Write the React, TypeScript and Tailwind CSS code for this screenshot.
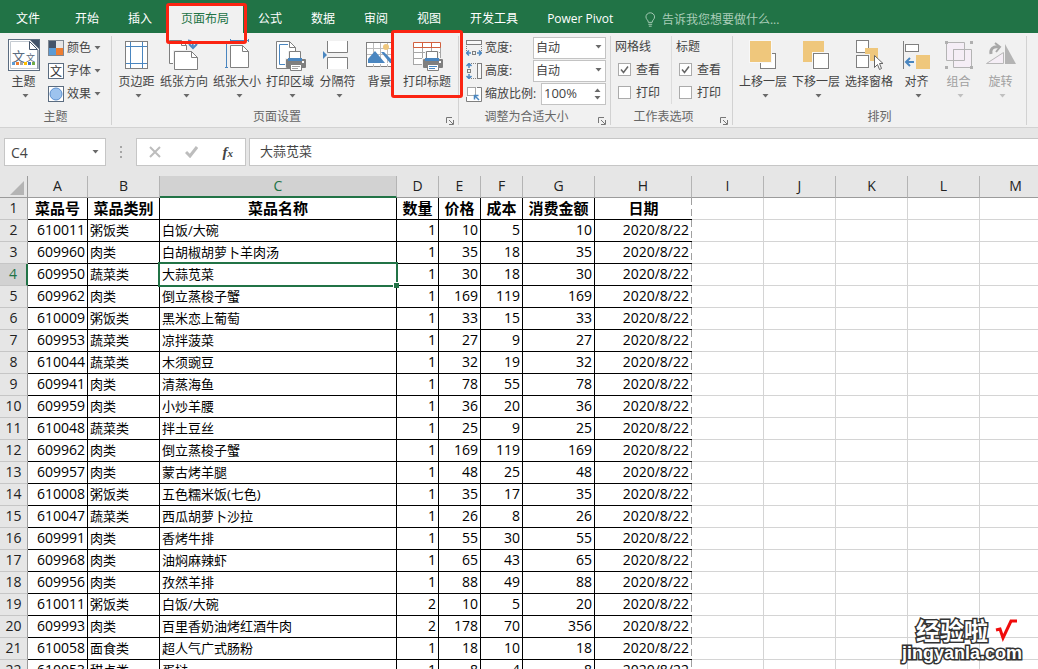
import type { ReactNode } from 'react'

type Row = [string, string, string, number, number, number, number]

const ROWS: Row[] = [
    ['610011', '粥饭类', '白饭/大碗', 1, 10, 5, 10],
    ['609960', '肉类', '白胡椒胡萝卜羊肉汤', 1, 35, 18, 35],
    ['609950', '蔬菜类', '大蒜苋菜', 1, 30, 18, 30],
    ['609962', '肉类', '倒立蒸梭子蟹', 1, 169, 119, 169],
    ['610009', '粥饭类', '黑米恋上葡萄', 1, 33, 15, 33],
    ['609953', '蔬菜类', '凉拌菠菜', 1, 27, 9, 27],
    ['610044', '蔬菜类', '木须豌豆', 1, 32, 19, 32],
    ['609941', '肉类', '清蒸海鱼', 1, 78, 55, 78],
    ['609959', '肉类', '小炒羊腰', 1, 36, 20, 36],
    ['610048', '蔬菜类', '拌土豆丝', 1, 25, 9, 25],
    ['609962', '肉类', '倒立蒸梭子蟹', 1, 169, 119, 169],
    ['609957', '肉类', '蒙古烤羊腿', 1, 48, 25, 48],
    ['610008', '粥饭类', '五色糯米饭(七色)', 1, 35, 17, 35],
    ['610047', '蔬菜类', '西瓜胡萝卜沙拉', 1, 26, 8, 26],
    ['609991', '肉类', '香烤牛排', 1, 55, 30, 55],
    ['609968', '肉类', '油焖麻辣虾', 1, 65, 43, 65],
    ['609956', '肉类', '孜然羊排', 1, 88, 49, 88],
    ['610011', '粥饭类', '白饭/大碗', 2, 10, 5, 20],
    ['609993', '肉类', '百里香奶油烤红酒牛肉', 2, 178, 70, 356],
    ['610058', '面食类', '超人气广式肠粉', 1, 18, 10, 18],
    ['610053', '甜点类', '蛋挞', 1, 8, 4, 8],
]

const DATE = '2020/8/22'
const HEADERS = ['菜品号', '菜品类别', '菜品名称', '数量', '价格', '成本', '消费金额', '日期']
const COLUMNS = ['A', 'B', 'C', 'D', 'E', 'F', 'G', 'H', 'I', 'J', 'K', 'L', 'M']
const EMPTY = ['I', 'J', 'K', 'L', 'M']
const TABS = ['开始', '插入', '页面布局', '公式', '数据', '审阅', '视图', '开发工具', 'Power Pivot']

const GRAY = '#7f7f7f'
const BLUE = '#4a86c0'
const SAND = '#efc77c'

function Caret({ className = 'text-[#6a6a6a]' }: { className?: string }) {
    return (
        <svg width="7" height="4" viewBox="0 0 7 4" className={`shrink-0 ${className}`}>
            <path d="M0.5 0h6L3.5 3.5z" fill="currentColor" />
        </svg>
    )
}

function Icon({ children, size = 32 }: { children: ReactNode; size?: number }) {
    return (
        <svg width={size} height={size} viewBox={`0 0 ${size} ${size}`} className="shrink-0" fill="none">
            {children}
        </svg>
    )
}

function Printer({ lines }: { lines: string }) {
    return (
        <g>
            <path d="M14 12h14v7h5v10h-22v-10h3z" fill="#f1f1f1" />
            <rect x="12" y="20" width="20" height="9" rx="1" fill={GRAY} />
            <path d="M15.5 20.5v-8h11v8z" fill="#fff" stroke={GRAY} />
            <rect x="14" y="19" width="14" height="3" fill={BLUE} />
            <rect x="28" y="22" width="2" height="2" fill="#fff" />
            <path d="M16.5 25.5h11v6h-11z" fill="#fff" stroke={GRAY} />
            <path d="M18 27.5h8M18 29.5h6" stroke={lines} />
        </g>
    )
}

const themeIcon = (
    <Icon>
        <rect x="0.5" y="0.5" width="31" height="31" fill="#fff" stroke="#5b6c80" />
        <path d="M2.5 29.5v-27h19l8 8v19z" stroke="#c4cad1" />
        <path d="M30 11v19" stroke="#5b6c80" />
        <path d="M22 1h9v9z" fill="#44546a" />
        <path d="M21.5 2.5v8h8z" fill="#fff" stroke="#44546a" />
        <text x="4" y="22" fontSize="13" fill="#5b6c80">文</text>
        <text x="18" y="22" fontSize="9" fill="#5b6c80">文</text>
        <rect x="4" y="23" width="3" height="3" fill="#5b9bd5" />
        <rect x="8" y="23" width="3" height="3" fill="#ed7d31" />
        <rect x="12" y="23" width="3" height="3" fill="#a5a5a5" />
        <rect x="16" y="23" width="3" height="3" fill="#ffc000" />
        <rect x="20" y="23" width="3" height="3" fill="#4472c4" />
        <rect x="24" y="23" width="3" height="3" fill="#70ad47" />
    </Icon>
)

const colorsIcon = (
    <Icon size={16}>
        <rect width="16" height="16" fill="#7f8791" />
        <rect x="1" y="1" width="7" height="7" fill="#44546a" />
        <rect x="8" y="1" width="7" height="7" fill="#e7e6e6" />
        <rect x="1" y="8" width="7" height="7" fill="#5b9bd5" />
        <rect x="8" y="8" width="7" height="7" fill="#ed7d31" />
    </Icon>
)

const fontsIcon = (
    <Icon size={16}>
        <rect x="0.5" y="0.5" width="15" height="15" fill="#fff" stroke="#5b6c80" />
        <text x="2" y="13" fontSize="12" fill="#333">文</text>
    </Icon>
)

const effectsIcon = (
    <Icon size={16}>
        <rect x="0.5" y="0.5" width="15" height="15" fill="#fff" stroke="#5b6c80" />
        <circle cx="8" cy="8" r="6" fill="#9dc3ee" stroke="#5b8fcf" />
    </Icon>
)

const marginsIcon = (
    <Icon>
        <rect x="4.5" y="2.5" width="22" height="27" fill="#fff" stroke={GRAY} />
        <path d="M9.5 3v26M21.5 3v26M5 7.5h21M5 24.5h21" stroke={BLUE} />
    </Icon>
)

const orientationIcon = (
    <Icon>
        <path d="M1.5 24.5v-23h12l5 5v18z" fill="#fff" stroke={GRAY} />
        <path d="M13.5 1.5v5h5" stroke={GRAY} />
        <path d="M5 11h19l8 7v14H5z" fill="#f1f1f1" />
        <path d="M6.5 30.5v-18h17l6 6v12z" fill="#fff" stroke={GRAY} />
        <path d="M23.5 12.5v6h6" stroke={GRAY} />
        <path d="M20 1.5c4 0 5 2 5 6" stroke={BLUE} strokeWidth="2" />
        <path d="M21 5l4 4 4-4" stroke={BLUE} strokeWidth="2" />
    </Icon>
)

const sizeIcon = (
    <Icon>
        <path d="M5.5 2v27M4 2.5h3M4 28.5h3M9 1.5h18M9.5 0v3M27.5 0v3" stroke={BLUE} />
        <path d="M9.5 28.5v-22h12l6 6v16z" fill="#fff" stroke={GRAY} />
        <path d="M21.5 6.5v6h6" stroke={GRAY} />
    </Icon>
)

const printAreaIcon = (
    <Icon>
        <path d="M2.5 29.5v-27h13l6 6v21z" fill="#fff" stroke={GRAY} />
        <path d="M15.5 2.5v6h6" stroke={GRAY} />
        <path d="M14 5.5H5.5v20H12" stroke={BLUE} />
        <Printer lines="#a0a0a0" />
    </Icon>
)

const breaksIcon = (
    <Icon>
        <path d="M6 2h19v11H6zM6 19h19v11H6z" fill="#fff" />
        <path d="M5.5 2v11.5h20V2M5.5 30V18.5h20V30" stroke={GRAY} />
        <path d="M1 12l4 4-4 4z" fill={BLUE} />
    </Icon>
)

const backgroundIcon = (
    <Icon>
        <rect x="2.5" y="3.5" width="27" height="24" fill="#fff" stroke={GRAY} />
        <path d="M9.5 4v24M16.5 4v24M23.5 4v24M3 9.5h26M3 15.5h26" stroke="#bcbcbc" />
        <circle cx="22" cy="8" r="3" fill={SAND} />
        <path d="M4 24v-4l7-8 10 12zM17 13h3l9 9v2h-3z" fill={BLUE} />
        <path d="M3 24.5h26" stroke="#fff" />
    </Icon>
)

const printTitlesIcon = (
    <Icon>
        <path d="M2 3h28v23H2z" fill="#fff" />
        <path d="M2.5 8v18M11.5 8v18M20.5 8v18M29.5 8v18M2 13.5h28M2 19.5h28M2 25.5h28" stroke="#a6a6a6" />
        <path d="M2.5 3.5h27v5h-27zM11.5 3.5v5M20.5 3.5v5" stroke="#d2603f" />
        <Printer lines={BLUE} />
    </Icon>
)

const forwardIcon = (
    <Icon>
        <rect x="13.5" y="14.5" width="15" height="15" fill="#fff" stroke={GRAY} />
        <rect x="2" y="1" width="23" height="23" fill="#f8f8f8" />
        <rect x="3" y="2" width="21" height="21" fill={SAND} />
    </Icon>
)

const backwardIcon = (
    <Icon>
        <rect x="3" y="2" width="21" height="21" fill={SAND} />
        <rect x="12" y="13" width="18" height="18" fill="#f8f8f8" />
        <rect x="13.5" y="14.5" width="15" height="15" fill="#fff" stroke={GRAY} />
    </Icon>
)

const selectionIcon = (
    <Icon>
        <rect x="3.5" y="1.5" width="12" height="12" fill="#fff" stroke={GRAY} />
        <rect x="12" y="9" width="13" height="13" fill={SAND} />
        <rect x="2" y="15" width="15" height="15" fill="#f1f1f1" />
        <rect x="3.5" y="16.5" width="12" height="12" fill="#fff" stroke={GRAY} />
        <path d="M21.5 16.5v12l3-3 2 5 2-1-2-5h3.5z" fill="#fff" stroke="#666" />
    </Icon>
)

const alignIcon = (
    <Icon>
        <path d="M2.5 2v28" stroke={GRAY} />
        <rect x="4.5" y="5.5" width="13" height="7" fill="#fff" stroke={GRAY} />
        <rect x="15" y="16" width="14" height="14" fill={SAND} />
        <path d="M13 23H6M9 19l-4 4 4 4" stroke={BLUE} strokeWidth="2" />
    </Icon>
)

const groupIcon = (
    <Icon>
        <path d="M3.5 3.5h18v18h-18zM10.5 10.5h18v18h-18z" fill="#f5eef6" stroke="#b4b4b4" />
        <path d="M10.5 21.5v-11h11" stroke="#b4b4b4" />
        <path d="M2 2h3v3H2zM27 2h3v3h-3zM2 27h3v3H2zM27 27h3v3h-3z" fill="#b0b0b0" />
    </Icon>
)

const rotateIcon = (
    <Icon>
        <path d="M1.5 24.5h17v-11z" fill="#f5eef6" stroke="#b8b8b8" />
        <path d="M20 5v20h11z" fill="#b4b4b4" />
        <path d="M6 15c-1-5 2-8 8-7" stroke="#a8a8a8" strokeWidth="3" />
        <path d="M10 4l5 4-4 5" stroke="#a8a8a8" strokeWidth="2" />
    </Icon>
)

const widthIcon = (
    <Icon size={16}>
        <rect x="0.5" y="0.5" width="15" height="4" fill="#f8f8f8" stroke={GRAY} />
        <path d="M0.5 6v5M15.5 6v5" stroke={GRAY} strokeDasharray="1 1" />
        <rect x="6.5" y="11.5" width="3" height="3" stroke={GRAY} />
        <path d="M5 13H1M3 10.5L0.5 13 3 15.5M11 13h4M13 10.5l2.5 2.5-2.5 2.5" stroke={BLUE} strokeWidth="1.5" />
    </Icon>
)

const heightIcon = (
    <Icon size={16}>
        <rect x="11.5" y="0.5" width="4" height="15" fill="#f8f8f8" stroke={GRAY} />
        <path d="M5 0.5h6M5 15.5h6" stroke={GRAY} strokeDasharray="1 1" />
        <rect x="1.5" y="6.5" width="3" height="3" stroke={GRAY} />
        <path d="M3 5V1M0.5 3L3 0.5 5.5 3M3 11v4M0.5 13L3 15.5 5.5 13" stroke={BLUE} strokeWidth="1.5" />
    </Icon>
)

const scaleIcon = (
    <Icon size={16}>
        <path d="M0.5 11v4.5h15v-14H11" fill="#fff" stroke={GRAY} />
        <path d="M1.5 1.5h8v8h-8z" fill="#fff" stroke="#555" strokeDasharray="1 1" />
        <path d="M13 14L9 10M8.5 13.5V9.5h4" stroke={BLUE} strokeWidth="1.5" />
    </Icon>
)

function RedBox({ className }: { className: string }) {
    return <span className={`pointer-events-none absolute z-10 rounded-[3px] border-3 border-[#fb2412] ${className}`} />
}

interface BigButtonProps {
    icon: ReactNode
    label: string
    caret?: boolean
    disabled?: boolean
    children?: ReactNode
}

function BigButton({ icon, label, caret = true, disabled, children }: BigButtonProps) {
    return (
        <button
            type="button"
            disabled={disabled}
            className="relative flex min-w-[41px] flex-col items-center px-0.5 whitespace-nowrap disabled:text-[#a0a0a0]"
        >
            {icon}
            <span className="mt-[3px] leading-4">{label}</span>
            {caret && (
                <span className="mt-1 ml-1 flex">
                    <Caret className={disabled ? 'text-[#c0c0c0]' : undefined} />
                </span>
            )}
            {children}
        </button>
    )
}

function SmallButton({ icon, label }: { icon: ReactNode; label: string }) {
    return (
        <button type="button" className="flex h-[23px] items-center gap-[3px]">
            {icon}
            <span>{label}</span>
            <Caret />
        </button>
    )
}

interface GroupProps {
    title: string
    className: string
    launcher?: boolean
    children: ReactNode
}

function Group({ title, className, launcher, children }: GroupProps) {
    return (
        <section className={`mt-[3px] mb-0.5 flex shrink-0 flex-col border-r border-[#d2d2d2] ${className}`}>
            <div className="flex h-[73px] items-start">{children}</div>
            <div className="flex h-4 items-end text-[#666]">
                <span className="flex-1 text-center leading-4">{title}</span>
                {launcher && (
                    <button type="button" aria-label={title} className="mr-1 ml-1">
                        <svg width="8" height="8" viewBox="0 0 8 8" fill="none" stroke="#777">
                            <path d="M0.5 6V0.5H6M3 3l4 4M7.5 3v4.5H3" />
                        </svg>
                    </button>
                )}
            </div>
        </section>
    )
}

function SizeSelect({ id, icon, label }: { id: string; icon: ReactNode; label: string }) {
    return (
        <div className="flex h-[23px] items-center">
            {icon}
            <label htmlFor={id} className="ml-[3px] flex-1">{label}</label>
            <div className="relative">
                <select id={id} className="block h-[22px] w-[73px] appearance-none border border-[#c3c3c3] bg-white px-0.5 text-[12px] leading-4">
                    <option>自动</option>
                </select>
                <span className="pointer-events-none absolute top-2 right-1 flex">
                    <Caret />
                </span>
            </div>
        </div>
    )
}

function Check({ label, checked }: { label: string; checked?: boolean }) {
    return (
        <label className="flex h-[23px] items-center gap-[5px] pl-[3px]">
            <span className="relative flex">
                <input type="checkbox" defaultChecked={checked} className="peer size-[13px] appearance-none border border-[#ababab] bg-white" />
                <svg viewBox="0 0 13 13" className="pointer-events-none absolute inset-0 hidden peer-checked:block" fill="none">
                    <path d="M3 6.5l2.5 3L10 3.5" stroke="#666" strokeWidth="1.5" />
                </svg>
            </span>
            {label}
        </label>
    )
}

function TabBar() {
    return (
        <nav className="flex h-[33px] shrink-0 items-end bg-[#217346] text-white">
            <button type="button" className="mr-[5px] h-[29px] w-14">文件</button>
            <div className="flex gap-px">
                {TABS.map(tab =>
                    tab === '页面布局' ? (
                        <button key={tab} type="button" className="relative h-[29px] bg-[#f1f1f1] px-3.5 text-[#217346]">
                            {tab}
                            <RedBox className="-top-px -right-1 -bottom-[11px] -left-px" />
                        </button>
                    ) : (
                        <button key={tab} type="button" className="h-[29px] px-3.5 whitespace-nowrap">{tab}</button>
                    ),
                )}
            </div>
            <label className="ml-[18px] flex h-[29px] flex-1 items-center gap-1.5 pt-0.5">
                <svg width="11" height="15" viewBox="0 0 11 15" fill="none" stroke="#a9cdb8">
                    <path d="M3.5 10.5C3.5 8 1 7.5 1 4.8a4.5 4.3 0 0 1 9 0c0 2.7-2.5 3.2-2.5 5.7zM3.5 12.5h4M4 14.5h3" />
                </svg>
                <input
                    type="text"
                    aria-label="告诉我您想要做什么"
                    placeholder="告诉我您想要做什么..."
                    className="w-full bg-transparent placeholder:text-[#a9cdb8]"
                />
            </label>
        </nav>
    )
}

function Ribbon() {
    return (
        <div className="flex h-[95px] shrink-0 border-b border-[#d2d2d2] bg-[#f1f1f1] text-[#444]">
            <Group title="主题" className="w-[112px]">
                <div className="flex pt-[3px] pl-[3px]">
                    <BigButton icon={themeIcon} label="主题" />
                </div>
                <div className="ml-1 flex flex-col">
                    <SmallButton icon={colorsIcon} label="颜色" />
                    <SmallButton icon={fontsIcon} label="字体" />
                    <SmallButton icon={effectsIcon} label="效果" />
                </div>
            </Group>

            <Group title="页面设置" className="w-[347px]" launcher>
                <div className="flex gap-px pt-[3px] pl-1">
                    <BigButton icon={marginsIcon} label="页边距" />
                    <BigButton icon={orientationIcon} label="纸张方向" />
                    <BigButton icon={sizeIcon} label="纸张大小" />
                    <BigButton icon={printAreaIcon} label="打印区域" />
                    <BigButton icon={breaksIcon} label="分隔符" />
                    <BigButton icon={backgroundIcon} label="背景" caret={false} />
                    <BigButton icon={printTitlesIcon} label="打印标题" caret={false}>
                        <RedBox className="-inset-x-2.5 -top-[9px] bottom-0" />
                    </BigButton>
                </div>
            </Group>

            <Group title="调整为合适大小" className="w-[152px]" launcher>
                <div className="flex w-[147px] flex-col pl-[7px]">
                    <SizeSelect id="page-width" icon={widthIcon} label="宽度:" />
                    <SizeSelect id="page-height" icon={heightIcon} label="高度:" />
                    <div className="flex h-[23px] items-center">
                        {scaleIcon}
                        <label htmlFor="scale" className="ml-[3px] flex-1 whitespace-nowrap">缩放比例:</label>
                        <div className="flex h-[22px] w-[65px] items-center border border-[#c3c3c3] bg-white">
                            <input id="scale" type="text" defaultValue="100%" className="w-full min-w-0 pl-0.5 text-[13px]" />
                            <span className="flex flex-col gap-1 pr-1">
                                <button type="button" aria-label="增大" className="flex rotate-180"><Caret /></button>
                                <button type="button" aria-label="减小" className="flex"><Caret /></button>
                            </span>
                        </div>
                    </div>
                </div>
            </Group>

            <Group title="工作表选项" className="w-[122px]" launcher>
                <fieldset className="w-[60px] pl-1">
                    <legend className="float-left h-[22px] w-full leading-[22px]">网格线</legend>
                    <Check label="查看" checked />
                    <Check label="打印" />
                </fieldset>
                <fieldset className="w-[60px] border-l border-[#dcdcdc] pl-1">
                    <legend className="float-left h-[22px] w-full leading-[22px]">标题</legend>
                    <Check label="查看" checked />
                    <Check label="打印" />
                </fieldset>
            </Group>

            <Group title="排列" className="w-[294px]">
                <div className="flex gap-px pt-[3px] pl-1">
                    <BigButton icon={forwardIcon} label="上移一层" />
                    <BigButton icon={backwardIcon} label="下移一层" />
                    <BigButton icon={selectionIcon} label="选择窗格" caret={false} />
                    <BigButton icon={alignIcon} label="对齐" />
                    <BigButton icon={groupIcon} label="组合" disabled />
                    <BigButton icon={rotateIcon} label="旋转" disabled />
                </div>
            </Group>
        </div>
    )
}

function FormulaBar() {
    return (
        <div className="flex h-12 shrink-0 items-center pl-1 text-[#444]">
            <div className="flex h-7 w-[102px] items-center border border-[#c6c6c6] bg-white pr-1.5">
                <input type="text" aria-label="名称框" defaultValue="C4" className="w-full min-w-0 pl-1.5 text-[14px]" />
                <button type="button" aria-label="名称列表" className="flex"><Caret /></button>
            </div>
            <svg width="30" height="12" viewBox="0 0 30 12" fill="#a6a6a6">
                <path d="M14 0h2v2h-2zM14 5h2v2h-2zM14 10h2v2h-2z" />
            </svg>
            <div className="flex h-7 w-[110px] items-center justify-around border border-[#c6c6c6] bg-white">
                <button type="button" aria-label="取消">
                    <svg width="12" height="12" viewBox="0 0 12 12" fill="none" stroke="#bdbdbd" strokeWidth="2">
                        <path d="M1 1l10 10M11 1L1 11" />
                    </svg>
                </button>
                <button type="button" aria-label="输入">
                    <svg width="13" height="12" viewBox="0 0 13 12" fill="none" stroke="#bdbdbd" strokeWidth="3">
                        <path d="M1 6l4 4 7-9" />
                    </svg>
                </button>
                <button type="button" className="font-['Liberation_Serif',serif] text-[15px] leading-4 font-bold italic">
                    f<sub className="bottom-0 text-[11px]">x</sub>
                </button>
            </div>
            <input
                type="text"
                aria-label="编辑栏"
                defaultValue="大蒜苋菜"
                className="ml-[3px] h-7 flex-1 border border-r-0 border-[#c6c6c6] bg-white pb-[3px] pl-2.5 text-[13px]"
            />
        </div>
    )
}

const CELL = 'h-[22px] border-b p-0 align-top leading-5 whitespace-nowrap'
const BOXED = `${CELL} border-r border-black`
const BLANK = `${CELL} border-r border-[#d4d4d4]`
// last printed column: the page break is a long dashed line
const PAGE_EDGE = `${CELL} border-black bg-[linear-gradient(#a0a0a0_7px,transparent_7px)] bg-[size:1px_11px] bg-[position:right_top] bg-repeat-y`

function RowHead({ n }: { n: number }) {
    return (
        <th
            scope="row"
            className={
                n === 4
                    ? 'h-[22px] border-r-2 border-b border-r-[#217346] border-b-[#c6c6c6] bg-[#d2d2d2] p-0 align-top text-[14px] leading-5 font-normal text-[#217346]'
                    : 'h-[22px] border-r border-b border-r-[#9b9b9b] border-b-[#c6c6c6] bg-[#e6e6e6] p-0 align-top text-[14px] leading-5 font-normal text-[#222]'
            }
        >
            {n}
        </th>
    )
}

function Sheet() {
    return (
        <table className="w-full min-w-[1052px] table-fixed border-separate border-spacing-0 bg-white text-black">
            <colgroup>
                <col className="w-7" />
                <col className="w-[60px]" />
                <col className="w-[72px]" />
                <col className="w-[237px]" />
                <col className="w-[42px]" />
                <col className="w-[42px]" />
                <col className="w-[42px]" />
                <col className="w-[72px]" />
                <col className="w-[97px]" />
                <col className="w-[72px]" />
                <col className="w-[72px]" />
                <col className="w-[72px]" />
                <col className="w-[72px]" />
                <col />
            </colgroup>
            <thead>
                <tr className="bg-[#e6e6e6] text-[14px]">
                    <td className="h-[22px] border-r border-b border-[#9b9b9b] p-0">
                        <svg width="14" height="14" viewBox="0 0 14 14" className="mt-0.5 mr-[3px] ml-auto">
                            <path d="M14 0v14H0z" fill="#b4b4b4" />
                        </svg>
                    </td>
                    {COLUMNS.map(col => (
                        <th
                            key={col}
                            scope="col"
                            className={
                                col === 'C'
                                    ? 'h-[22px] border-r border-b-2 border-r-[#b4b4b4] border-b-[#217346] bg-[#d2d2d2] p-0 align-top leading-5 font-normal text-[#217346]'
                                    : 'h-[22px] border-r border-b border-r-[#b4b4b4] border-b-[#9b9b9b] p-0 align-top leading-5 font-normal text-[#222]'
                            }
                        >
                            {col}
                        </th>
                    ))}
                </tr>
            </thead>
            <tbody>
                <tr className="text-[15px]">
                    <RowHead n={1} />
                    {HEADERS.map(name => (
                        <td key={name} className={`${name === '日期' ? PAGE_EDGE : BOXED} text-center font-bold`}>
                            {name}
                        </td>
                    ))}
                    {EMPTY.map(col => <td key={col} className={BLANK} />)}
                </tr>
                {ROWS.map(([id, kind, dish, ...nums], i) => (
                    <tr key={i} className="text-[14px]">
                        <RowHead n={i + 2} />
                        <td className={`${BOXED} pr-0.5 text-right`}>{id}</td>
                        <td className={`${BOXED} pl-0.5 text-[13px]`}>{kind}</td>
                        <td className={`${BOXED} relative pl-0.5 text-[13px]`}>
                            {dish}
                            {i === 2 && (
                                <span className="absolute -inset-0.5 z-10 border-2 border-[#217346]">
                                    <span className="absolute -right-[3px] -bottom-[3px] size-1.5 border-t border-l border-white bg-[#217346]" />
                                </span>
                            )}
                        </td>
                        {nums.map((n, j) => (
                            <td key={j} className={`${BOXED} pr-0.5 text-right`}>{n}</td>
                        ))}
                        <td className={`${PAGE_EDGE} pr-[3px] text-right`}>{DATE}</td>
                        {EMPTY.map(col => <td key={col} className={BLANK} />)}
                    </tr>
                ))}
            </tbody>
        </table>
    )
}

function Watermark() {
    return (
        <div className="pointer-events-none absolute right-4 bottom-1.5 z-20 flex flex-col items-end font-bold text-white [paint-order:stroke] [-webkit-text-stroke:3px_#333]">
            <div className="flex items-center gap-1.5 pr-1">
                <span className="text-[24px] leading-6">经验啦</span>
                <svg width="24" height="24" viewBox="0 0 24 24" fill="none" stroke="#f00c0c">
                    <path d="M2 11l4-1 3 9L17 2h6" strokeWidth="3" />
                </svg>
            </div>
            <span className="font-['Liberation_Sans',sans-serif] text-[18px] leading-5">jingyanla.com</span>
        </div>
    )
}

export default function App() {
    return (
        <div className="relative flex h-screen flex-col overflow-hidden bg-[#e6e6e6] font-['Open_Sans','Noto_Sans_CJK_SC',sans-serif] text-[12px]">
            <TabBar />
            <Ribbon />
            <FormulaBar />
            <main className="min-h-0 flex-1 overflow-hidden">
                <Sheet />
            </main>
            <Watermark />
        </div>
    )
}
